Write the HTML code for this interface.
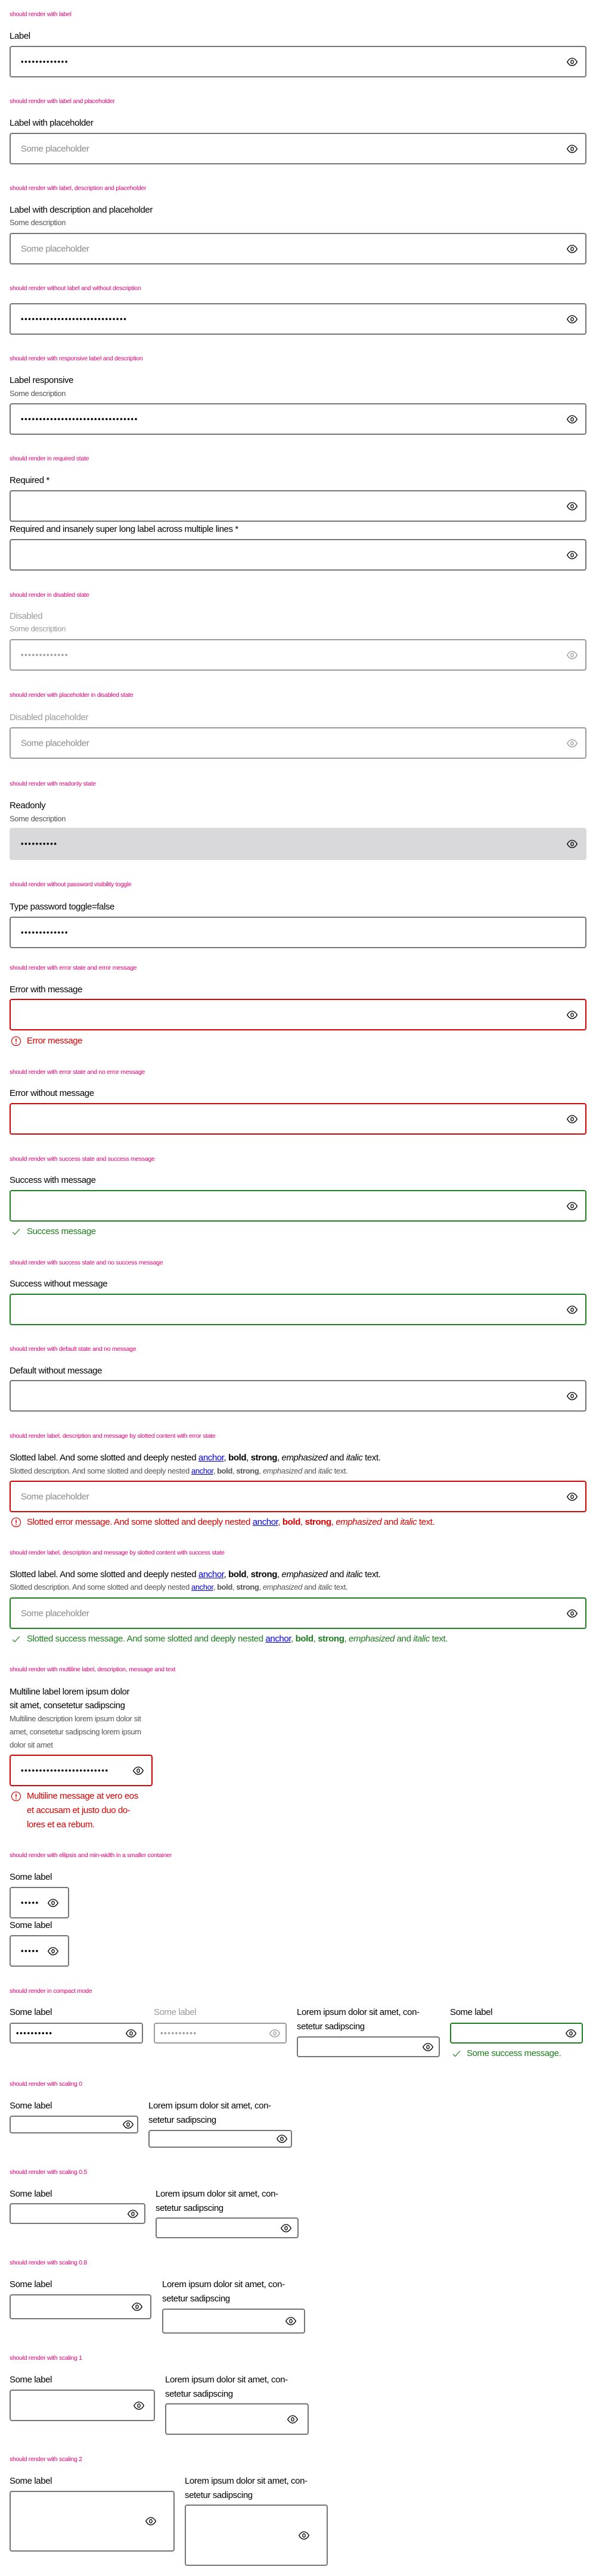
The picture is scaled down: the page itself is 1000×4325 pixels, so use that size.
<!DOCTYPE html>
<html><head><meta charset="utf-8">
<style>
*{box-sizing:border-box;margin:0;padding:0}
body{width:1000px;height:4325px;position:relative;background:#fff;font-family:"Liberation Sans",sans-serif;color:#000;overflow:hidden}
.t{position:absolute;left:16px;font-size:10.5px;line-height:16px;color:#e20074;white-space:nowrap;letter-spacing:-0.3px}
.l{position:absolute;font-size:15px;line-height:24px;white-space:nowrap;letter-spacing:-0.4px}
.d{position:absolute;font-size:13px;line-height:22px;color:#555;white-space:nowrap;letter-spacing:-0.4px}
.g{color:#9a9a9e}
.i{position:absolute;border:2px solid #737378;border-radius:4px;background:#fff}
.i.dis{border-color:#9a9a9e}
.i.ro{border:none;background:#d9d9dc}
.i.err{border-color:#d90000}
.i.ok{border-color:#1e7e1e}
.dots{position:absolute;left:17px;top:50%;transform:translateY(-50%);font-size:13px;letter-spacing:1.6px;font-weight:bold;line-height:16px;white-space:nowrap;overflow:hidden}
.ph{position:absolute;left:17px;top:50%;transform:translateY(-50%);font-size:15px;color:#8a8a8e;letter-spacing:-0.4px}
.eye{position:absolute;top:50%;margin-top:-10px;width:20px;height:20px}
.m{position:absolute;left:45px;font-size:15px;line-height:24px;white-space:nowrap;letter-spacing:-0.4px}
.red{color:#d90000}.grn{color:#1e7e1e}
.ic{position:absolute;left:18px;width:18px;height:18px}
a{color:#0000ee;text-decoration:underline}
</style></head><body>
<svg width="0" height="0" style="position:absolute"><defs>
<symbol id="e" viewBox="0 0 24 24"><path d="M2 12C5 7 8.5 4.5 12 4.5S19 7 22 12C19 17 15.5 19.5 12 19.5S5 17 2 12Z" fill="none" stroke="currentColor" stroke-width="1.6"/><ellipse cx="12" cy="12" rx="2.6" ry="3.6" fill="none" stroke="currentColor" stroke-width="1.6"/></symbol>
<symbol id="x" viewBox="0 0 24 24"><circle cx="12" cy="12" r="10" fill="none" stroke="#d90000" stroke-width="1.5"/><path d="M12 6v8" stroke="#d90000" stroke-width="2"/><circle cx="12" cy="17.5" r="1.2" fill="#d90000"/></symbol>
<symbol id="c" viewBox="0 0 24 24"><path d="M4 13l5 5L20 6" fill="none" stroke="#1e7e1e" stroke-width="1.6"/></symbol>
</defs></svg>

<!-- S1 -->
<div class="t" style="top:16px">should render with label</div>
<div class="l" style="left:16px;top:49px">Label</div>
<div class="i" style="left:16px;top:77px;width:968px;height:53px"><span class="dots">•••••••••••••</span><svg class="eye" style="right:12px"><use href="#e"/></svg></div>
<!-- S2 -->
<div class="t" style="top:162px">should render with label and placeholder</div>
<div class="l" style="left:16px;top:195px">Label with placeholder</div>
<div class="i" style="left:16px;top:223px;width:968px;height:53px"><span class="ph">Some placeholder</span><svg class="eye" style="right:12px"><use href="#e"/></svg></div>
<!-- S3 -->
<div class="t" style="top:308px">should render with label, description and placeholder</div>
<div class="l" style="left:16px;top:341px">Label with description and placeholder</div>
<div class="d" style="left:16px;top:363px">Some description</div>
<div class="i" style="left:16px;top:391px;width:968px;height:53px"><span class="ph">Some placeholder</span><svg class="eye" style="right:12px"><use href="#e"/></svg></div>
<!-- S4 -->
<div class="t" style="top:476px">should render without label and without description</div>
<div class="i" style="left:16px;top:509px;width:968px;height:53px"><span class="dots">•••••••••••••••••••••••••••••</span><svg class="eye" style="right:12px"><use href="#e"/></svg></div>
<!-- S5 -->
<div class="t" style="top:594px">should render with responsive label and description</div>
<div class="l" style="left:16px;top:627px">Label responsive</div>
<div class="d" style="left:16px;top:650px">Some description</div>
<div class="i" style="left:16px;top:677px;width:968px;height:53px"><span class="dots">••••••••••••••••••••••••••••••••</span><svg class="eye" style="right:12px"><use href="#e"/></svg></div>
<!-- S6 -->
<div class="t" style="top:762px">should render in required state</div>
<div class="l" style="left:16px;top:795px">Required *</div>
<div class="i" style="left:16px;top:823px;width:968px;height:53px"><svg class="eye" style="right:12px"><use href="#e"/></svg></div>
<div class="l" style="left:16px;top:877px">Required and insanely super long label across multiple lines *</div>
<div class="i" style="left:16px;top:905px;width:968px;height:53px"><svg class="eye" style="right:12px"><use href="#e"/></svg></div>
<!-- S7 -->
<div class="t" style="top:991px">should render in disabled state</div>
<div class="l g" style="left:16px;top:1023px">Disabled</div>
<div class="d g" style="left:16px;top:1045px">Some description</div>
<div class="i dis" style="left:16px;top:1073px;width:968px;height:53px;color:#9a9a9e"><span class="dots">•••••••••••••</span><svg class="eye" style="right:12px"><use href="#e"/></svg></div>
<!-- S8 -->
<div class="t" style="top:1159px">should render with placeholder in disabled state</div>
<div class="l g" style="left:16px;top:1193px">Disabled placeholder</div>
<div class="i dis" style="left:16px;top:1221px;width:968px;height:53px;color:#9a9a9e"><span class="ph">Some placeholder</span><svg class="eye" style="right:12px"><use href="#e"/></svg></div>
<!-- S9 -->
<div class="t" style="top:1308px">should render with readonly state</div>
<div class="l" style="left:16px;top:1341px">Readonly</div>
<div class="d" style="left:16px;top:1364px">Some description</div>
<div class="i ro" style="left:16px;top:1390px;width:968px;height:54px"><span class="dots" style="left:19px">••••••••••</span><svg class="eye" style="right:14px"><use href="#e"/></svg></div>
<!-- S10 -->
<div class="t" style="top:1477px">should render without password visibility toggle</div>
<div class="l" style="left:16px;top:1511px">Type password toggle=false</div>
<div class="i" style="left:16px;top:1539px;width:968px;height:53px"><span class="dots">•••••••••••••</span></div>
<!-- S11 -->
<div class="t" style="top:1617px">should render with error state and error message</div>
<div class="l" style="left:16px;top:1650px">Error with message</div>
<div class="i err" style="left:16px;top:1677px;width:968px;height:53px"><svg class="eye" style="right:12px"><use href="#e"/></svg></div>
<svg class="ic" style="top:1739px"><use href="#x"/></svg><div class="m red" style="top:1736px">Error message</div>
<!-- S12 -->
<div class="t" style="top:1792px">should render with error state and no error message</div>
<div class="l" style="left:16px;top:1824px">Error without message</div>
<div class="i err" style="left:16px;top:1852px;width:968px;height:53px"><svg class="eye" style="right:12px"><use href="#e"/></svg></div>
<!-- S13 -->
<div class="t" style="top:1938px">should render with success state and success message</div>
<div class="l" style="left:16px;top:1970px">Success with message</div>
<div class="i ok" style="left:16px;top:1998px;width:968px;height:53px"><svg class="eye" style="right:12px"><use href="#e"/></svg></div>
<svg class="ic" style="top:2059px"><use href="#c"/></svg><div class="m grn" style="top:2056px">Success message</div>
<!-- S14 -->
<div class="t" style="top:2112px">should render with success state and no success message</div>
<div class="l" style="left:16px;top:2144px">Success without message</div>
<div class="i ok" style="left:16px;top:2172px;width:968px;height:53px"><svg class="eye" style="right:12px"><use href="#e"/></svg></div>
<!-- S15 -->
<div class="t" style="top:2257px">should render with default state and no message</div>
<div class="l" style="left:16px;top:2290px">Default without message</div>
<div class="i" style="left:16px;top:2317px;width:968px;height:53px"><svg class="eye" style="right:12px"><use href="#e"/></svg></div>
<!-- S16 -->
<div class="t" style="top:2403px">should render label, description and message by slotted content with error state</div>
<div class="l" style="left:16px;top:2436px">Slotted label. And some slotted and deeply nested <a>anchor</a>, <b>bold</b>, <strong>strong</strong>, <em>emphasized</em> and <i>italic</i> text.</div>
<div class="d" style="left:16px;top:2459px">Slotted description. And some slotted and deeply nested <a>anchor</a>, <b>bold</b>, <strong>strong</strong>, <em>emphasized</em> and <i>italic</i> text.</div>
<div class="i err" style="left:16px;top:2486px;width:968px;height:53px"><span class="ph">Some placeholder</span><svg class="eye" style="right:12px"><use href="#e"/></svg></div>
<svg class="ic" style="top:2547px"><use href="#x"/></svg><div class="m red" style="top:2544px">Slotted error message. And some slotted and deeply nested <a>anchor</a>, <b>bold</b>, <strong>strong</strong>, <em>emphasized</em> and <i>italic</i> text.</div>
<!-- S17 -->
<div class="t" style="top:2599px">should render label, description and message by slotted content with success state</div>
<div class="l" style="left:16px;top:2632px">Slotted label. And some slotted and deeply nested <a>anchor</a>, <b>bold</b>, <strong>strong</strong>, <em>emphasized</em> and <i>italic</i> text.</div>
<div class="d" style="left:16px;top:2654px">Slotted description. And some slotted and deeply nested <a>anchor</a>, <b>bold</b>, <strong>strong</strong>, <em>emphasized</em> and <i>italic</i> text.</div>
<div class="i ok" style="left:16px;top:2682px;width:968px;height:53px"><span class="ph">Some placeholder</span><svg class="eye" style="right:12px"><use href="#e"/></svg></div>
<svg class="ic" style="top:2743px"><use href="#c"/></svg><div class="m grn" style="top:2740px">Slotted success message. And some slotted and deeply nested <a>anchor</a>, <b>bold</b>, <strong>strong</strong>, <em>emphasized</em> and <i>italic</i> text.</div>
<!-- S18 -->
<div class="t" style="top:2795px">should render with multiline label, description, message and text</div>
<div class="l" style="left:16px;top:2829px;line-height:23px">Multiline label lorem ipsum dolor<br>sit amet, consetetur sadipscing</div>
<div class="d" style="left:16px;top:2875px">Multiline description lorem ipsum dolor sit<br>amet, consetetur sadipscing lorem ipsum<br>dolor sit amet</div>
<div class="i err" style="left:16px;top:2946px;width:240px;height:53px"><span class="dots" style="width:175px">••••••••••••••••••••••••</span><svg class="eye" style="right:12px"><use href="#e"/></svg></div>
<svg class="ic" style="top:3007px"><use href="#x"/></svg><div class="m red" style="top:3004px">Multiline message at vero eos<br>et accusam et justo duo do-<br>lores et ea rebum.</div>
<!-- S19 -->
<div class="t" style="top:3107px">should render with ellipsis and min-width in a smaller container</div>
<div class="l" style="left:16px;top:3140px">Some label</div>
<div class="i" style="left:16px;top:3168px;width:100px;height:53px"><span class="dots" style="width:33px">•••••</span><svg class="eye" style="right:15px"><use href="#e"/></svg></div>
<div class="l" style="left:16px;top:3221px">Some label</div>
<div class="i" style="left:16px;top:3249px;width:100px;height:53px"><span class="dots" style="width:33px">•••••</span><svg class="eye" style="right:15px"><use href="#e"/></svg></div>
<!-- S20 compact -->
<div class="t" style="top:3335px">should render in compact mode</div>
<div class="l" style="left:16px;top:3367px">Some label</div>
<div class="i" style="left:16px;top:3396px;width:224px;height:35px"><span class="dots" style="left:9px">••••••••••</span><svg class="eye" style="right:8px"><use href="#e"/></svg></div>
<div class="l g" style="left:258px;top:3367px">Some label</div>
<div class="i dis" style="left:258px;top:3396px;width:223px;height:35px;color:#9a9a9e"><span class="dots" style="left:9px">••••••••••</span><svg class="eye" style="right:8px"><use href="#e"/></svg></div>
<div class="l" style="left:498px;top:3367px">Lorem ipsum dolor sit amet, con-<br>setetur sadipscing</div>
<div class="i" style="left:498px;top:3419px;width:240px;height:35px"><svg class="eye" style="right:8px"><use href="#e"/></svg></div>
<div class="l" style="left:755px;top:3367px">Some label</div>
<div class="i ok" style="left:755px;top:3396px;width:223px;height:35px"><svg class="eye" style="right:8px"><use href="#e"/></svg></div>
<svg class="ic" style="left:757px;top:3439px"><use href="#c"/></svg><div class="m grn" style="left:783px;top:3436px">Some success message.</div>
<!-- S21 scaling 0 -->
<div class="t" style="top:3491px">should render with scaling 0</div>
<div class="l" style="left:16px;top:3524px">Some label</div>
<div class="i" style="left:16px;top:3552px;width:216px;height:30px"><svg class="eye" style="right:5px"><use href="#e"/></svg></div>
<div class="l" style="left:249px;top:3524px">Lorem ipsum dolor sit amet, con-<br>setetur sadipscing</div>
<div class="i" style="left:249px;top:3576px;width:241px;height:30px"><svg class="eye" style="right:5px"><use href="#e"/></svg></div>
<!-- S22 0.5 -->
<div class="t" style="top:3639px">should render with scaling 0.5</div>
<div class="l" style="left:16px;top:3672px">Some label</div>
<div class="i" style="left:16px;top:3699px;width:228px;height:35px"><svg class="eye" style="right:9px"><use href="#e"/></svg></div>
<div class="l" style="left:261px;top:3672px">Lorem ipsum dolor sit amet, con-<br>setetur sadipscing</div>
<div class="i" style="left:261px;top:3723px;width:240px;height:35px"><svg class="eye" style="right:9px"><use href="#e"/></svg></div>
<!-- S23 0.8 -->
<div class="t" style="top:3791px">should render with scaling 0.8</div>
<div class="l" style="left:16px;top:3824px">Some label</div>
<div class="i" style="left:16px;top:3852px;width:238px;height:42px"><svg class="eye" style="right:12px"><use href="#e"/></svg></div>
<div class="l" style="left:272px;top:3824px">Lorem ipsum dolor sit amet, con-<br>setetur sadipscing</div>
<div class="i" style="left:272px;top:3876px;width:240px;height:42px"><svg class="eye" style="right:12px"><use href="#e"/></svg></div>
<!-- S24 1 -->
<div class="t" style="top:3951px">should render with scaling 1</div>
<div class="l" style="left:16px;top:3984px">Some label</div>
<div class="i" style="left:16px;top:4012px;width:244px;height:53px"><svg class="eye" style="right:15px"><use href="#e"/></svg></div>
<div class="l" style="left:277px;top:3984px">Lorem ipsum dolor sit amet, con-<br>setetur sadipscing</div>
<div class="i" style="left:277px;top:4035px;width:241px;height:53px"><svg class="eye" style="right:15px"><use href="#e"/></svg></div>
<!-- S25 2 -->
<div class="t" style="top:4121px">should render with scaling 2</div>
<div class="l" style="left:16px;top:4154px">Some label</div>
<div class="i" style="left:16px;top:4182px;width:277px;height:102px"><svg class="eye" style="right:28px"><use href="#e"/></svg></div>
<div class="l" style="left:310px;top:4154px">Lorem ipsum dolor sit amet, con-<br>setetur sadipscing</div>
<div class="i" style="left:310px;top:4205px;width:240px;height:103px"><svg class="eye" style="right:28px"><use href="#e"/></svg></div>
</body></html>
